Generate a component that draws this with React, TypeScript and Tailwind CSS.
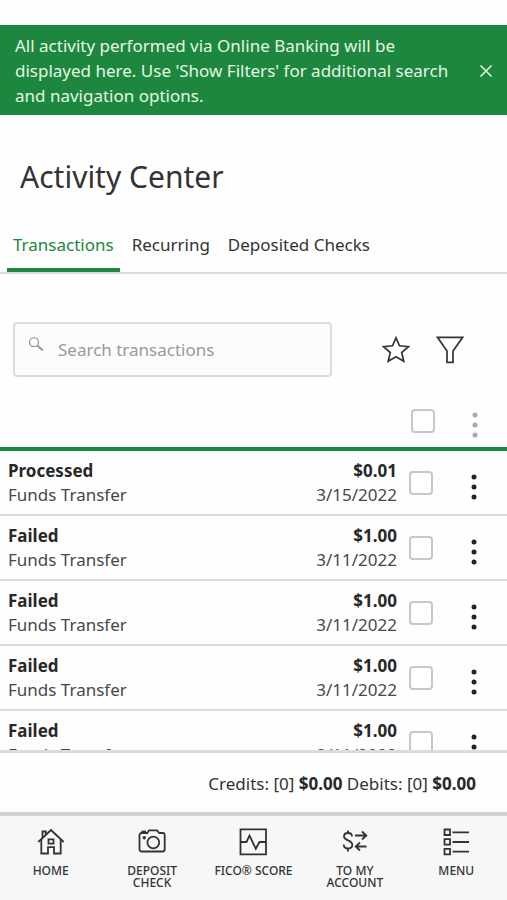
import { useState } from 'react'
import type { ReactNode } from 'react'

const tabs = ['Transactions', 'Recurring', 'Deposited Checks']

const transactions = [
  { id: 1, status: 'Processed', type: 'Funds Transfer', amount: '$0.01', date: '3/15/2022' },
  { id: 2, status: 'Failed', type: 'Funds Transfer', amount: '$1.00', date: '3/11/2022' },
  { id: 3, status: 'Failed', type: 'Funds Transfer', amount: '$1.00', date: '3/11/2022' },
  { id: 4, status: 'Failed', type: 'Funds Transfer', amount: '$1.00', date: '3/11/2022' },
  { id: 5, status: 'Failed', type: 'Funds Transfer', amount: '$1.00', date: '3/11/2022' },
]

function NavIcon({ children }: { children: ReactNode }) {
  return (
    <svg viewBox="0 0 28 28" className="w-7 h-7" fill="none" stroke="currentColor" strokeWidth="1.8" aria-hidden="true">
      {children}
    </svg>
  )
}

function Dots() {
  return (
    <svg viewBox="0 0 6 26" className="w-[6px] h-[26px]" fill="currentColor" aria-hidden="true">
      <circle cx="3" cy="3" r="2.5" />
      <circle cx="3" cy="13" r="2.5" />
      <circle cx="3" cy="23" r="2.5" />
    </svg>
  )
}

const navItems = [
  {
    label: 'HOME',
    icon: (
      <NavIcon>
        <path d="M1.3 14 14 2l12.700 12" />
        <path d="M4.300 11.500v14h6.700v-6.300h6v6.300h6.700v-14" />
        <path d="M5.500 9.500V3.500h3.300v3" />
        <path d="M11.500 11.300h5v4.400h-5z" />
      </NavIcon>
    ),
  },
  {
    label: 'DEPOSIT CHECK',
    icon: (
      <NavIcon>
        <path d="M3.500 5H9.300l1.700-2.700h8L21.300 5h3.400a2 2 0 0 1 2 2v14.500a2 2 0 0 1-2 2H3.500a2 2 0 0 1-2-2V7a2 2 0 0 1 2-2z" />
        <path d="M3.500 3.500H8" />
        <circle cx="15.300" cy="14.500" r="5.900" />
        <circle cx="6.300" cy="9.700" r="1.700" fill="currentColor" stroke="none" />
      </NavIcon>
    ),
  },
  {
    label: 'FICO® SCORE',
    icon: (
      <NavIcon>
        <path d="M1.500 1.300h25.500v25H1.500z" />
        <path d="M1.500 14h6l3-6.300 6.300 13L20.500 14H27" />
      </NavIcon>
    ),
  },
  {
    label: 'TO MY ACCOUNT',
    icon: (
      <NavIcon>
        <path d="M11 8.500c0-2.200-1.700-3.500-4-3.500S3 6.300 3 8.500c0 4.700 8.300 3 8.300 8.300 0 2.400-2 3.700-4.300 3.700s-4.300-1.400-4.300-3.900" />
        <path d="M7 2.500V5M7 20.500V23.500" />
        <path d="M14 7.500h11M21 3.500l4.300 4L21 11.500" />
        <path d="M25.500 18.500H14.500M19 14.500l-4.300 4 4.300 4" />
      </NavIcon>
    ),
  },
  {
    label: 'MENU',
    icon: (
      <NavIcon>
        <path d="M2.500 1.500H8V7H2.500zM2.500 11.200H8v5.500H2.500zM2.500 20.900H8v5.500H2.500z" />
        <path d="M10.500 4.300H27M10.500 14H27M10.500 23.700H27" />
      </NavIcon>
    ),
  },
]

function Checkbox({ label }: { label: string }) {
  return (
    <input
      type="checkbox"
      aria-label={label}
      className="block appearance-none w-6 h-6 border-2 border-[#c8c8c8] rounded-[4px] bg-white checked:bg-[#1d873f]"
    />
  )
}

export default function App() {
  const [activeTab, setActiveTab] = useState('Transactions')
  const [showBanner, setShowBanner] = useState(true)

  return (
    <div className="h-screen flex flex-col bg-[#fefefe] text-[#333] text-[17px] leading-[25px] font-['Noto_Sans','Open_Sans',sans-serif]">
      {showBanner && (
        <div className="mt-[25px] pl-[15px] pr-[13px] pt-2 pb-[7px] bg-[#1d873f] text-[#e4f7e4] flex items-center justify-between shrink-0">
          <p className="flex-1 pr-4">
            All activity performed via Online Banking will be displayed here. Use 'Show Filters' for additional search
            and navigation options.
          </p>
          <button aria-label="Close" onClick={() => setShowBanner(false)}>
            <svg viewBox="0 0 16 16" className="w-4 h-4" fill="none" stroke="currentColor" strokeWidth="1.5">
              <path d="M2.500 2.500l11 11M13.500 2.500l-11 11" />
            </svg>
          </button>
        </div>
      )}

      <h1 className="px-5 pt-[42px] text-[30px] leading-[40px] shrink-0">Activity Center</h1>

      <div role="tablist" className="mt-[31px] pl-[7px] flex gap-[6px] border-b-2 border-[#dcdcde] shrink-0">
        {tabs.map((tab) => (
          <button
            key={tab}
            role="tab"
            aria-selected={activeTab === tab}
            onClick={() => setActiveTab(tab)}
            className={`px-[6px] pt-1 pb-[11px] border-b-4 ${
              activeTab === tab ? 'border-[#1d873f] text-[#1d873f]' : 'border-transparent'
            }`}
          >
            {tab}
          </button>
        ))}
      </div>

      <div className="mt-12 pl-[13px] pr-[43px] flex items-center gap-[26px] shrink-0">
        <label className="flex-1 min-w-0 mr-6 h-[55px] pl-[13px] flex items-center gap-[14px] border-2 border-[#dcdcdc] rounded-[4px] bg-[#fcfcfc]">
          <svg viewBox="0 0 16 16" className="w-4 h-4 mb-3 text-[#999]" fill="none" stroke="currentColor" aria-hidden="true">
            <circle cx="6" cy="6.200" r="4.500" strokeWidth="1.300" />
            <path d="M9.300 9.500l5.500 5" strokeWidth="2.200" />
          </svg>
          <input
            type="text"
            aria-label="Search transactions"
            placeholder="Search transactions"
            className="flex-1 min-w-0 bg-transparent outline-none placeholder:text-[#999]"
          />
        </label>
        <button aria-label="Favorites">
          <svg viewBox="0 0 28 28" className="w-7 h-7" fill="none" stroke="currentColor" strokeWidth="1.700">
            <path d="M14 1.800l3.500 8 9 .8-6.800 5.900 2.100 8.700L14 20.800l-7.800 4.400 2.100-8.700-6.800-5.900 9-.8z" />
          </svg>
        </button>
        <button aria-label="Filters">
          <svg viewBox="0 0 28 28" className="w-7 h-7" fill="none" stroke="currentColor" strokeWidth="1.700">
            <path d="M1.500 1.300h25.200L17 15v11.300h-6V15z" />
          </svg>
        </button>
      </div>

      <div className="mt-[17px] flex-1 min-h-0 overflow-y-auto [scrollbar-width:none]">
        <table className="w-full border-separate border-spacing-0">
          <thead>
            <tr className="h-[57px]">
              <th colSpan={2} className="border-b-4 border-[#1d873f]" aria-label="Transaction" />
              <th className="w-[43px] pl-[14px] border-b-4 border-[#1d873f]">
                <Checkbox label="Select all" />
              </th>
              <th className="w-[67px] pl-8 pt-2 border-b-4 border-[#1d873f] text-left">
                <button aria-label="All actions" className="block text-[#aaa]">
                  <Dots />
                </button>
              </th>
            </tr>
          </thead>
          <tbody>
            {transactions.map((t) => (
              <tr key={t.id} className="h-[65px] leading-6">
                <td className="pl-2 border-b-2 border-[#dcdcdc]">
                  <div className="font-bold text-[#282828]">{t.status}</div>
                  <div className="text-[#484848]">{t.type}</div>
                </td>
                <td className="border-b-2 border-[#dcdcdc] text-right">
                  <div className="font-bold text-[#282828]">{t.amount}</div>
                  <div className="text-[#484848]">{t.date}</div>
                </td>
                <td className="pl-3 border-b-2 border-[#dcdcdc]">
                  <Checkbox label={`Select ${t.status} ${t.date}`} />
                </td>
                <td className="pl-[31px] pt-2 border-b-2 border-[#dcdcdc]">
                  <button aria-label="Actions" className="block text-[#222]">
                    <Dots />
                  </button>
                </td>
              </tr>
            ))}
          </tbody>
        </table>
      </div>

      <div className="pl-4 pr-[31px] pt-[18px] pb-4 border-t-[3px] border-[#dcdcdc] bg-[#fefefe] text-right shrink-0">
        Credits: [0] <strong className="text-[#282828]">$0.00</strong> Debits: [0]{' '}
        <strong className="text-[#282828]">$0.00</strong>
      </div>

      <nav className="h-[88px] pt-3 grid grid-cols-5 border-t-4 border-[#d2d2d2] bg-[#f7f7f7] shrink-0">
        {navItems.map((item) => (
          <a key={item.label} href="#" className="flex flex-col items-center gap-[9px]">
            {item.icon}
            <span className="max-w-20 text-center text-xs leading-3 font-medium">{item.label}</span>
          </a>
        ))}
      </nav>
    </div>
  )
}
